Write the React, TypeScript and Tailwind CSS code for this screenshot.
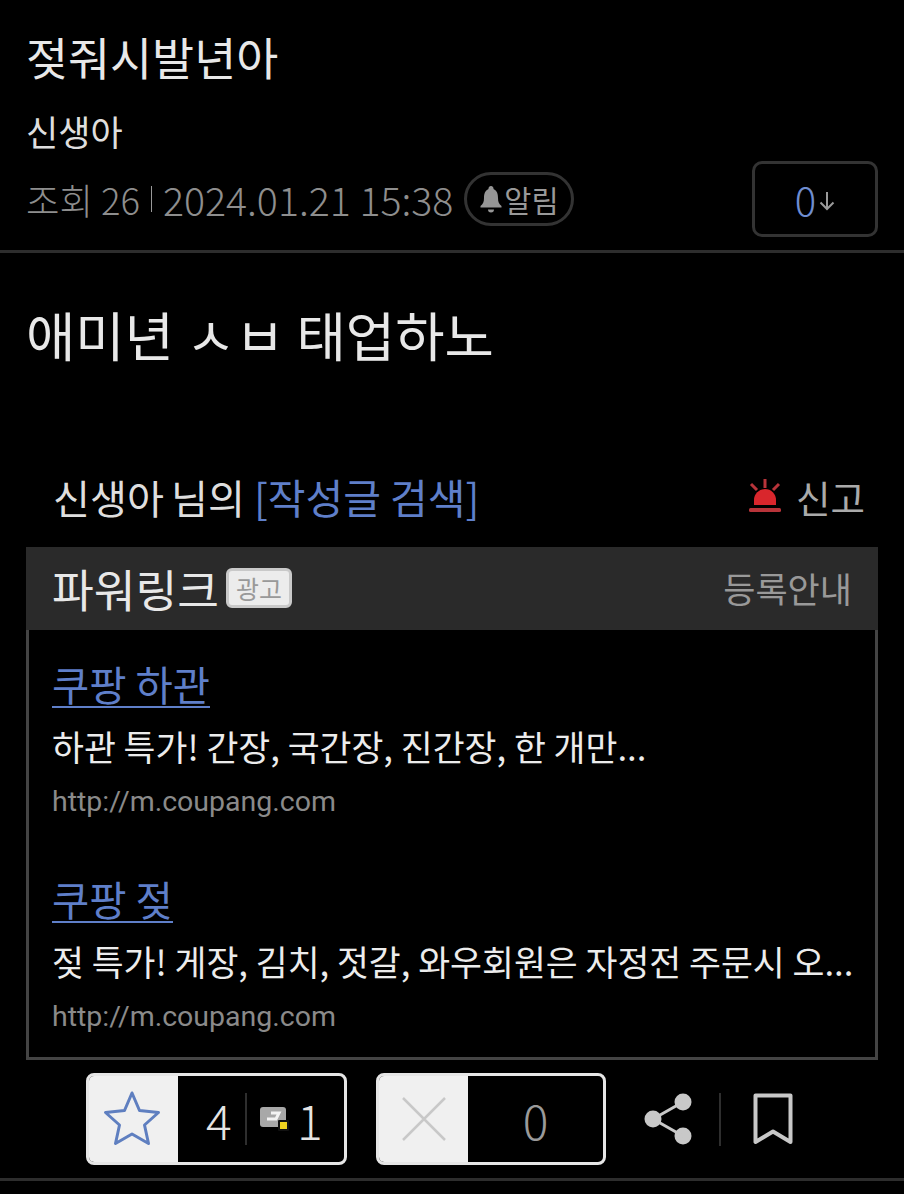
const font = "font-['Noto_Sans_CJK_KR','Noto_Sans',sans-serif]";

function Star() {
  return (
    <svg className="mr-[3px]" width="60" height="58" viewBox="0 0 60 58" fill="none">
      <path
        d="M30 3 L37.5 20.5 L56.5 22.5 L42.5 35 L46.5 53.5 L30 44 L13.5 53.5 L17.5 35 L3.5 22.5 L22.5 20.5 Z"
        stroke="#5f7fc0"
        strokeWidth="3"
        strokeLinejoin="round"
      />
    </svg>
  );
}

function Siren() {
  return (
    <svg width="34" height="38" viewBox="0 0 34 38" fill="none">
      <path d="M6 27 V22 a11 11 0 0 1 22 0 V27 Z" fill="#d9262c" />
      <rect x="1" y="30" width="32" height="4" rx="1.5" fill="#b8343a" />
      <path d="M17 1 V10 M3 6 L9 12 M31 6 L25 12" stroke="#b8343a" strokeWidth="3" />
    </svg>
  );
}

function AdItem({ title, desc, url }: { title: string; desc: string; url: string }) {
  return (
    <div>
      <div className="text-[40.5px] leading-[48px] text-[#5f7fc9]">
        <span className="inline-block border-b-2 border-[#5f7fc9] leading-[44px]">{title}</span>
      </div>
      <p className="mt-[16px] whitespace-nowrap text-[34.7px] leading-[44px] text-[#ececec]">{desc}</p>
      <p className="mt-[16px] font-['Roboto',sans-serif] text-[28.5px] leading-[36px] text-[#8a8a8a]">{url}</p>
    </div>
  );
}

export default function App() {
  return (
    <div className={`${font} h-[1194px] min-h-screen w-[904px] overflow-hidden bg-black`}>
      <header className="h-[253px] border-b-[3px] border-[#2d2d2d] px-[26px] pt-[25px]">
        <h1 className="text-[45.7px] leading-[62px] text-[#e8e8e8]">젖줘시발년아</h1>
        <div className="mt-[20px] text-[35px] leading-[48px] text-[#dedede]">신생아</div>
        <div className="mt-[6px] flex items-start justify-between">
          <div className="flex items-center pt-[11px] text-[39.3px] font-light leading-[52px] text-[#8e8e8e]">
            <span className="text-[36.4px]">조회 26</span>
            <span className="mx-[11px] h-[26px] w-px bg-[#999]" />
            <span>2024.01.21 15:38</span>
            <span className="ml-[11px] flex h-[54px] w-[110px] items-center justify-center rounded-full border-[3px] border-[#333] text-[29.5px] font-normal text-[#999]">
              <svg width="22" height="28" viewBox="0 0 22 28" fill="#969696">
                <path d="M11 1 a2.5 2.5 0 0 1 2.5 3 C17 5.5 18 9 18 13 c0 4 1 6 3.5 8 V22.5 H0.5 V21 C3 19 4 17 4 13 c0-4 1-7.5 4.5-9 A2.5 2.5 0 0 1 11 1 Z M8 24.5 h6 a3 3 0 0 1-6 0 Z" />
              </svg>
              <span className="ml-[2px]">알림</span>
            </span>
          </div>
          <div className="flex h-[76px] w-[126px] items-center justify-center rounded-[10px] border-[3px] border-[#333]">
            <span className="text-[40px] font-light text-[#6f8dd0]">0</span>
            <svg className="ml-[3px] mt-[3px]" width="16" height="20" viewBox="0 0 16 20" fill="none" stroke="#9a9a9a" strokeWidth="2">
              <path d="M8 1 V18 M1.5 11.5 L8 18 L14.5 11.5" />
            </svg>
          </div>
        </div>
      </header>

      <main className="px-[26px]">
        <p className="pt-[47px] text-[53.6px] leading-[68px] text-[#e8e8e8]">애미년 ㅅㅂ 태업하노</p>

        <div className="mt-[94px] flex h-[70px] items-center justify-between pl-[27px] pr-[13px]">
          <div className="text-[40.2px] text-[#dedede]">
            <span className="[word-spacing:-2px]">신생아 님의</span>{" "}
            <span className="text-[41px] text-[#5f7fc9]">[작성글 검색]</span>
          </div>
          <div className="flex items-center gap-[14px] text-[37.5px] text-[#aaa]">
            <Siren />
            <span>신고</span>
          </div>
        </div>

        <section className="mt-[15px] border-[3px] border-t-0 border-[#444]">
          <div className="-mx-[3px] flex h-[83px] items-center justify-between bg-[#2a2a2a] px-[26px]">
            <div className="flex items-center">
              <span className="text-[45.4px] text-[#e8e8e8]">파워링크</span>
              <span className="ml-[7px] flex h-[40px] w-[66px] items-center justify-center rounded-[6px] border-[3px] border-[#c9c9c9] bg-[#ececec] text-[25px] text-[#999]">
                광고
              </span>
            </div>
            <span className="text-[35px] text-[#999]">등록안내</span>
          </div>
          <div className="flex h-[427px] flex-col gap-[55px] px-[23px] pt-[30px]">
            <AdItem title="쿠팡 하관" desc="하관 특가! 간장, 국간장, 진간장, 한 개만..." url="http://m.coupang.com" />
            <AdItem title="쿠팡 젖" desc="젖 특가! 게장, 김치, 젓갈, 와우회원은 자정전 주문시 오..." url="http://m.coupang.com" />
          </div>
        </section>

        <div className="mt-[13px] flex h-[92px] items-stretch pl-[60px]">
          <div className="flex w-[261px] overflow-hidden rounded-[8px] border-[3px] border-[#e6e6e6]">
            <div className="flex w-[89px] items-center justify-center bg-[#f0f0f0]">
              <Star />
            </div>
            <div className="flex flex-1 items-center text-[48px] font-light text-[#e4e4e4]">
              <span className="ml-[28px] w-[27px]">4</span>
              <span className="ml-[12px] h-[52px] w-[2px] bg-[#2e2e2e]" />
              <svg className="ml-[12px]" width="30" height="28" viewBox="0 0 30 28">
                <rect x="1" y="2" width="26" height="20" rx="3" fill="#a8a8a8" />
                <path d="M8 14 h9 l3-6 h-8" stroke="#f4f4f4" strokeWidth="3" fill="none" />
                <rect x="19" y="15" width="11" height="11" rx="1" fill="#111" />
                <rect x="21" y="17" width="7" height="7" fill="#efd21f" />
              </svg>
              <span className="ml-[8px]">1</span>
            </div>
          </div>
          <div className="ml-[29px] flex w-[230px] overflow-hidden rounded-[8px] border-[3px] border-[#e6e6e6]">
            <div className="flex w-[89px] items-center justify-center bg-[#f0f0f0]">
              <svg width="46" height="46" viewBox="0 0 46 46" stroke="#c8c8c8" strokeWidth="2.5">
                <path d="M2 2 L44 44 M44 2 L2 44" />
              </svg>
            </div>
            <div className="flex flex-1 items-center justify-center text-[48px] font-light text-[#9a9a9a]">0</div>
          </div>
          <div className="ml-[38px] flex items-center">
            <svg width="50" height="52" viewBox="0 0 50 52" fill="#c8c8c8">
              <circle cx="9" cy="26" r="8.5" />
              <circle cx="39" cy="9" r="8.5" />
              <circle cx="39" cy="43" r="8.5" />
              <path d="M9 26 L39 9 M9 26 L39 43" stroke="#c8c8c8" strokeWidth="3" />
            </svg>
            <span className="ml-[25px] h-[53px] w-[2px] bg-[#2e2e2e]" />
            <svg className="ml-[32px]" width="40" height="52" viewBox="0 0 40 52" fill="none" stroke="#c8c8c8" strokeWidth="4" strokeLinejoin="round">
              <path d="M2.5 2.5 H37.5 V49 L20 38.5 L2.5 49 Z" />
            </svg>
          </div>
        </div>
      </main>
      <div className="mt-[13px] h-[3px] bg-[#2d2d2d]" />
    </div>
  );
}
